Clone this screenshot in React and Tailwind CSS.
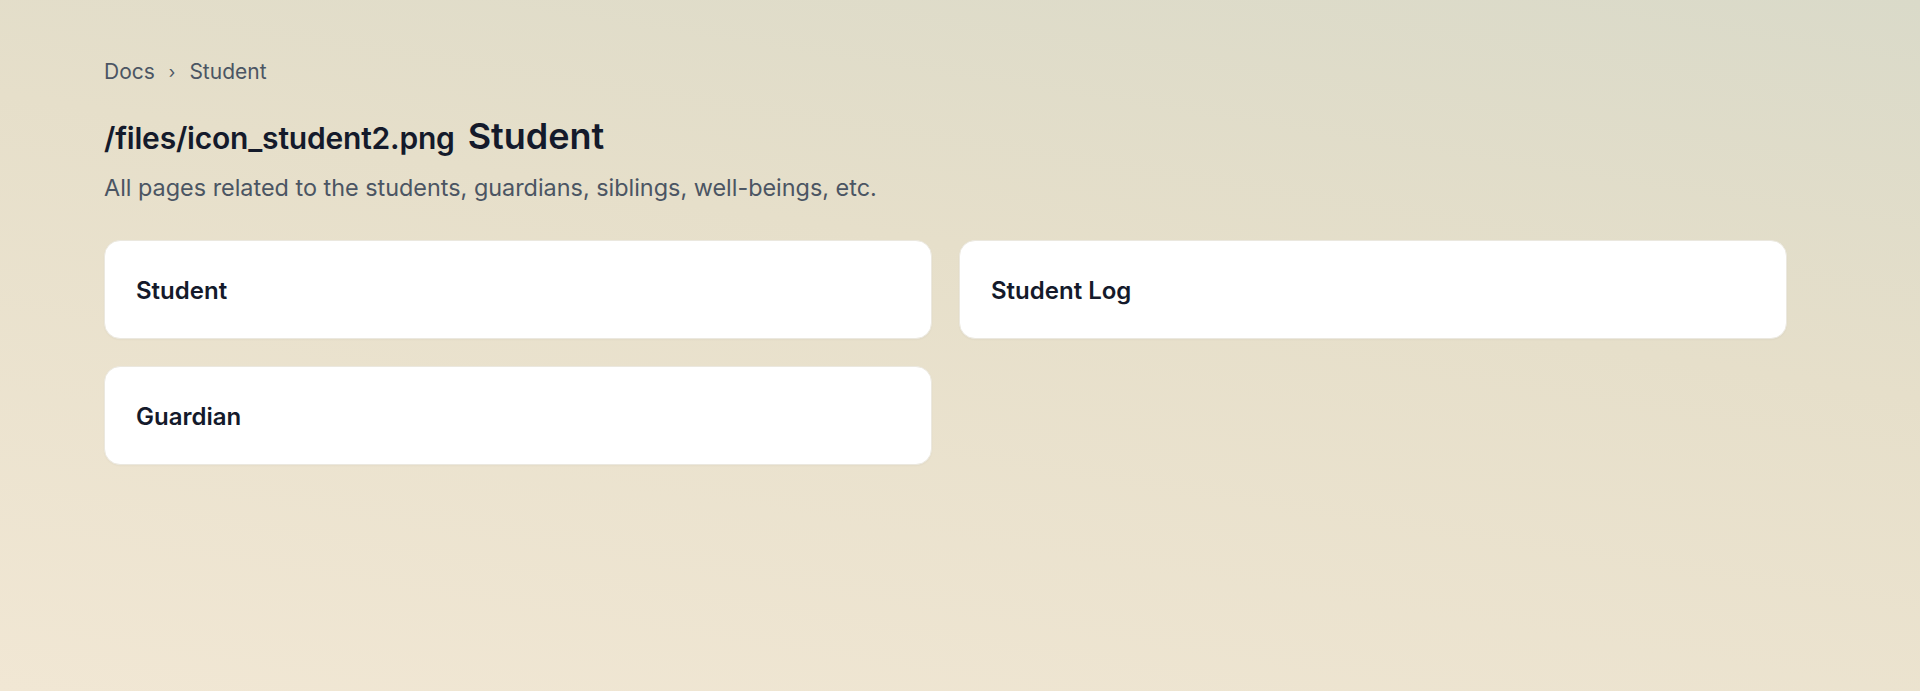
export default function App() {
  const cards = ["Student", "Student Log", "Guardian"];
  return (
    <div className="min-h-[691px] w-full bg-[linear-gradient(9deg,#f1e7d4,#e6dfca_60%,#dadac9)] font-['Inter',sans-serif]">
      <div className="pl-[104px] pr-[133px] pt-[58px]">
        <nav className="flex items-center gap-[14px] text-[21px] leading-[28px] text-[#4b5563]">
          <span>Docs</span>
          <span className="text-[17px]">›</span>
          <span>Student</span>
        </nav>
        <h1 className="mt-[30px] flex items-baseline gap-[13px] text-[#141a2b] font-semibold leading-[40px]">
          <span className="text-[30px] tracking-[-0.2px]">/files/icon_student2.png</span>
          <span className="text-[36px]">Student</span>
        </h1>
        <p className="mt-[15px] text-[23.4px] leading-[30px] text-[#4b5563]">
          All pages related to the students, guardians, siblings, well-beings, etc.
        </p>
        <div className="mt-[37px] grid grid-cols-2 gap-x-[27px] gap-y-[27px]">
          {cards.map((c) => (
            <div
              key={c}
              className="flex h-[99px] items-center rounded-[16px] border border-[#ebe8df] bg-white px-[31px] pt-[3px] shadow-[0_1px_2px_rgba(0,0,0,0.03)]"
            >
              <span className="text-[24px] font-semibold text-[#141a2b]">{c}</span>
            </div>
          ))}
        </div>
      </div>
    </div>
  );
}
